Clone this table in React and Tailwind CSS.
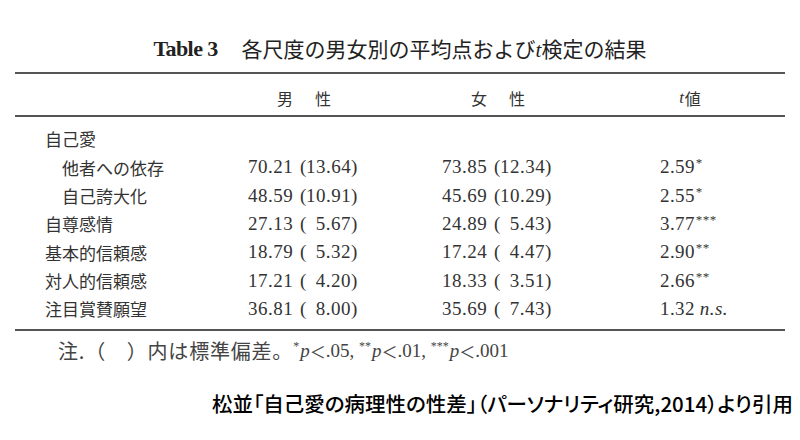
import React from 'react'

const rows = [
  { label: '自己愛', indent: false, m: null },
  { label: '他者への依存', indent: true, m: ['70.21', '13.64'], f: ['73.85', '12.34'], t: '2.59', sig: '*' },
  { label: '自己誇大化', indent: true, m: ['48.59', '10.91'], f: ['45.69', '10.29'], t: '2.55', sig: '*' },
  { label: '自尊感情', indent: false, m: ['27.13', '5.67'], f: ['24.89', '5.43'], t: '3.77', sig: '***' },
  { label: '基本的信頼感', indent: false, m: ['18.79', '5.32'], f: ['17.24', '4.47'], t: '2.90', sig: '**' },
  { label: '対人的信頼感', indent: false, m: ['17.21', '4.20'], f: ['18.33', '3.51'], t: '2.66', sig: '**' },
  { label: '注目賞賛願望', indent: false, m: ['36.81', '8.00'], f: ['35.69', '7.43'], t: '1.32', ns: true },
]

const serif = "font-['Liberation_Serif','Times_New_Roman',serif]"
const jp = "font-['Noto_Sans_CJK_JP',sans-serif]"

const Rule = () => <div className="h-[2px] bg-[#555555]" />

const MeanSd = ({ v }) => (
  <div className={`${serif} flex items-center text-[19px] tracking-[0.5px] text-[#333333]`}>
    <span className="w-[52px]">{v[0]}</span>
    <span className="w-[6px]">(</span>
    <span className="w-[45px] text-right">{v[1]}</span>
    <span>)</span>
  </div>
)

const Stars = ({ n }) => <sup className="text-[12px] top-[-0.45em] mr-[1px]">{n}</sup>

export default function App() {
  return (
    <div className="w-[800px] h-[440px] bg-white flex flex-col overflow-hidden">
      <div className="pt-[35px] h-[63px] flex justify-center items-center text-[#222222]">
        <span className={`${serif} font-bold text-[22px] leading-[28px] tracking-[-0.6px]`}>Table 3</span>
        <span className={`${jp} text-[21px] leading-[28px] ml-[24px]`}>
          各尺度の男女別の平均点および
          <span className={`${serif} italic`}>t</span>
          検定の結果
        </span>
      </div>

      <div className="mx-[15px] mt-[9px]">
        <Rule />
        <div className="h-[41px] pt-[12px] grid grid-cols-[233px_194px_218px_1fr] text-[#333333]">
          <div />
          <div className={`${jp} w-[112px] flex justify-center gap-[22px] text-[16px] leading-[24px]`}>
            <span>男</span>
            <span>性</span>
          </div>
          <div className={`${jp} w-[112px] flex justify-center gap-[22px] text-[16px] leading-[24px]`}>
            <span>女</span>
            <span>性</span>
          </div>
          <div className="w-[60px] flex justify-center text-[16px] leading-[24px]">
            <span className={`${serif} italic text-[17px] mr-[1px]`}>t</span>
            <span className={jp}>値</span>
          </div>
        </div>
        <Rule />

        <div className="pt-[8px] pb-[6px]">
          {rows.map((r) => (
            <div key={r.label} className="h-[28.33px] grid grid-cols-[233px_194px_218px_1fr] items-center">
              <div className={`${jp} text-[17px] text-[#333333] ${r.indent ? 'pl-[47px]' : 'pl-[30px]'}`}>
                {r.label}
              </div>
              {r.m ? <MeanSd v={r.m} /> : <div />}
              {r.f ? <MeanSd v={r.f} /> : <div />}
              {r.t ? (
                <div className={`${serif} text-[19px] tracking-[0.4px] text-[#333333]`}>
                  {r.t}
                  {r.sig && <sup className="text-[13px] ml-[1px] top-[-0.45em]">{r.sig}</sup>}
                  {r.ns && <span className="italic ml-[5px]">n.s.</span>}
                </div>
              ) : (
                <div />
              )}
            </div>
          ))}
        </div>
        <Rule />
      </div>

      <div className="mt-[8px] pl-[58px] h-[24px] flex items-center text-[#444444] whitespace-nowrap">
        <span className={`${jp} text-[20px] tracking-[0.8px]`}>注.（　）内は標準偏差。</span>
        <span className={`${serif} text-[19px] flex items-center`}>
          <Stars n="*" />
          <span className="italic">p</span>
          <span className={`${jp} text-[16px]`}>＜</span>
          <span>.05,&nbsp;</span>
          <Stars n="**" />
          <span className="italic">p</span>
          <span className={`${jp} text-[16px]`}>＜</span>
          <span>.01,&nbsp;</span>
          <Stars n="***" />
          <span className="italic">p</span>
          <span className={`${jp} text-[16px]`}>＜</span>
          <span>.001</span>
        </span>
      </div>

      <div className="mt-[26px] pl-[212px] h-[28px] flex items-center">
        <span className={`${jp} [font-feature-settings:'palt'] font-medium text-[20.5px] leading-[28px] text-black whitespace-nowrap`}>
          松並「自己愛の病理性の性差」（パーソナリティ研究,2014）より引用
        </span>
      </div>
    </div>
  )
}
